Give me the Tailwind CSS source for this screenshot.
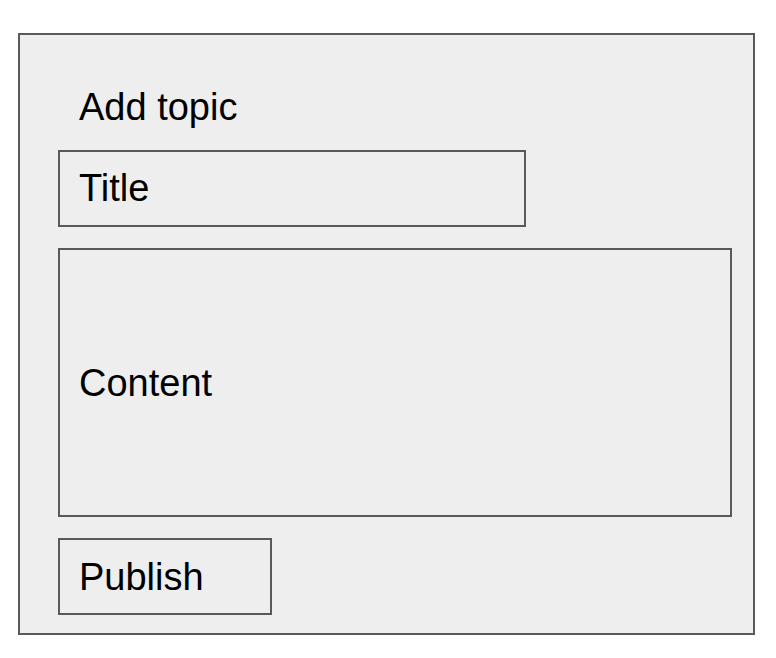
<!DOCTYPE html>
<html lang="en">
<head>
<meta charset="utf-8">
<meta name="viewport" content="width=device-width, initial-scale=1">
<title>Add topic</title>
<script src="https://cdn.jsdelivr.net/npm/@tailwindcss/browser@4"></script>
</head>
<body class="bg-white pt-[33px] pb-[23px] pl-[18px] pr-[21px] font-['Liberation_Sans',Arial,sans-serif] text-[38px] leading-[44px] text-black">
  <main class="border-2 border-[#595959] bg-[#eeeeee] pt-[50px] pb-[18px] pl-[38px] pr-[21px]">
    <form class="flex flex-col items-start gap-[21px]">
      <h1 class="px-[21px]">Add topic</h1>
      <input type="text" aria-label="Title" placeholder="Title" class="h-[77px] w-[468px] max-w-full border-2 border-[#595959] px-[19px] placeholder:text-black placeholder:opacity-100">
      <textarea aria-label="Content" placeholder="Content" class="block h-[269px] w-full resize-none border-2 border-[#595959] px-[19px] pt-[111px] placeholder:text-black placeholder:opacity-100"></textarea>
      <button type="button" class="h-[77px] w-[214px] border-2 border-[#595959] px-[19px] text-left">Publish</button>
    </form>
  </main>
</body>
</html>
